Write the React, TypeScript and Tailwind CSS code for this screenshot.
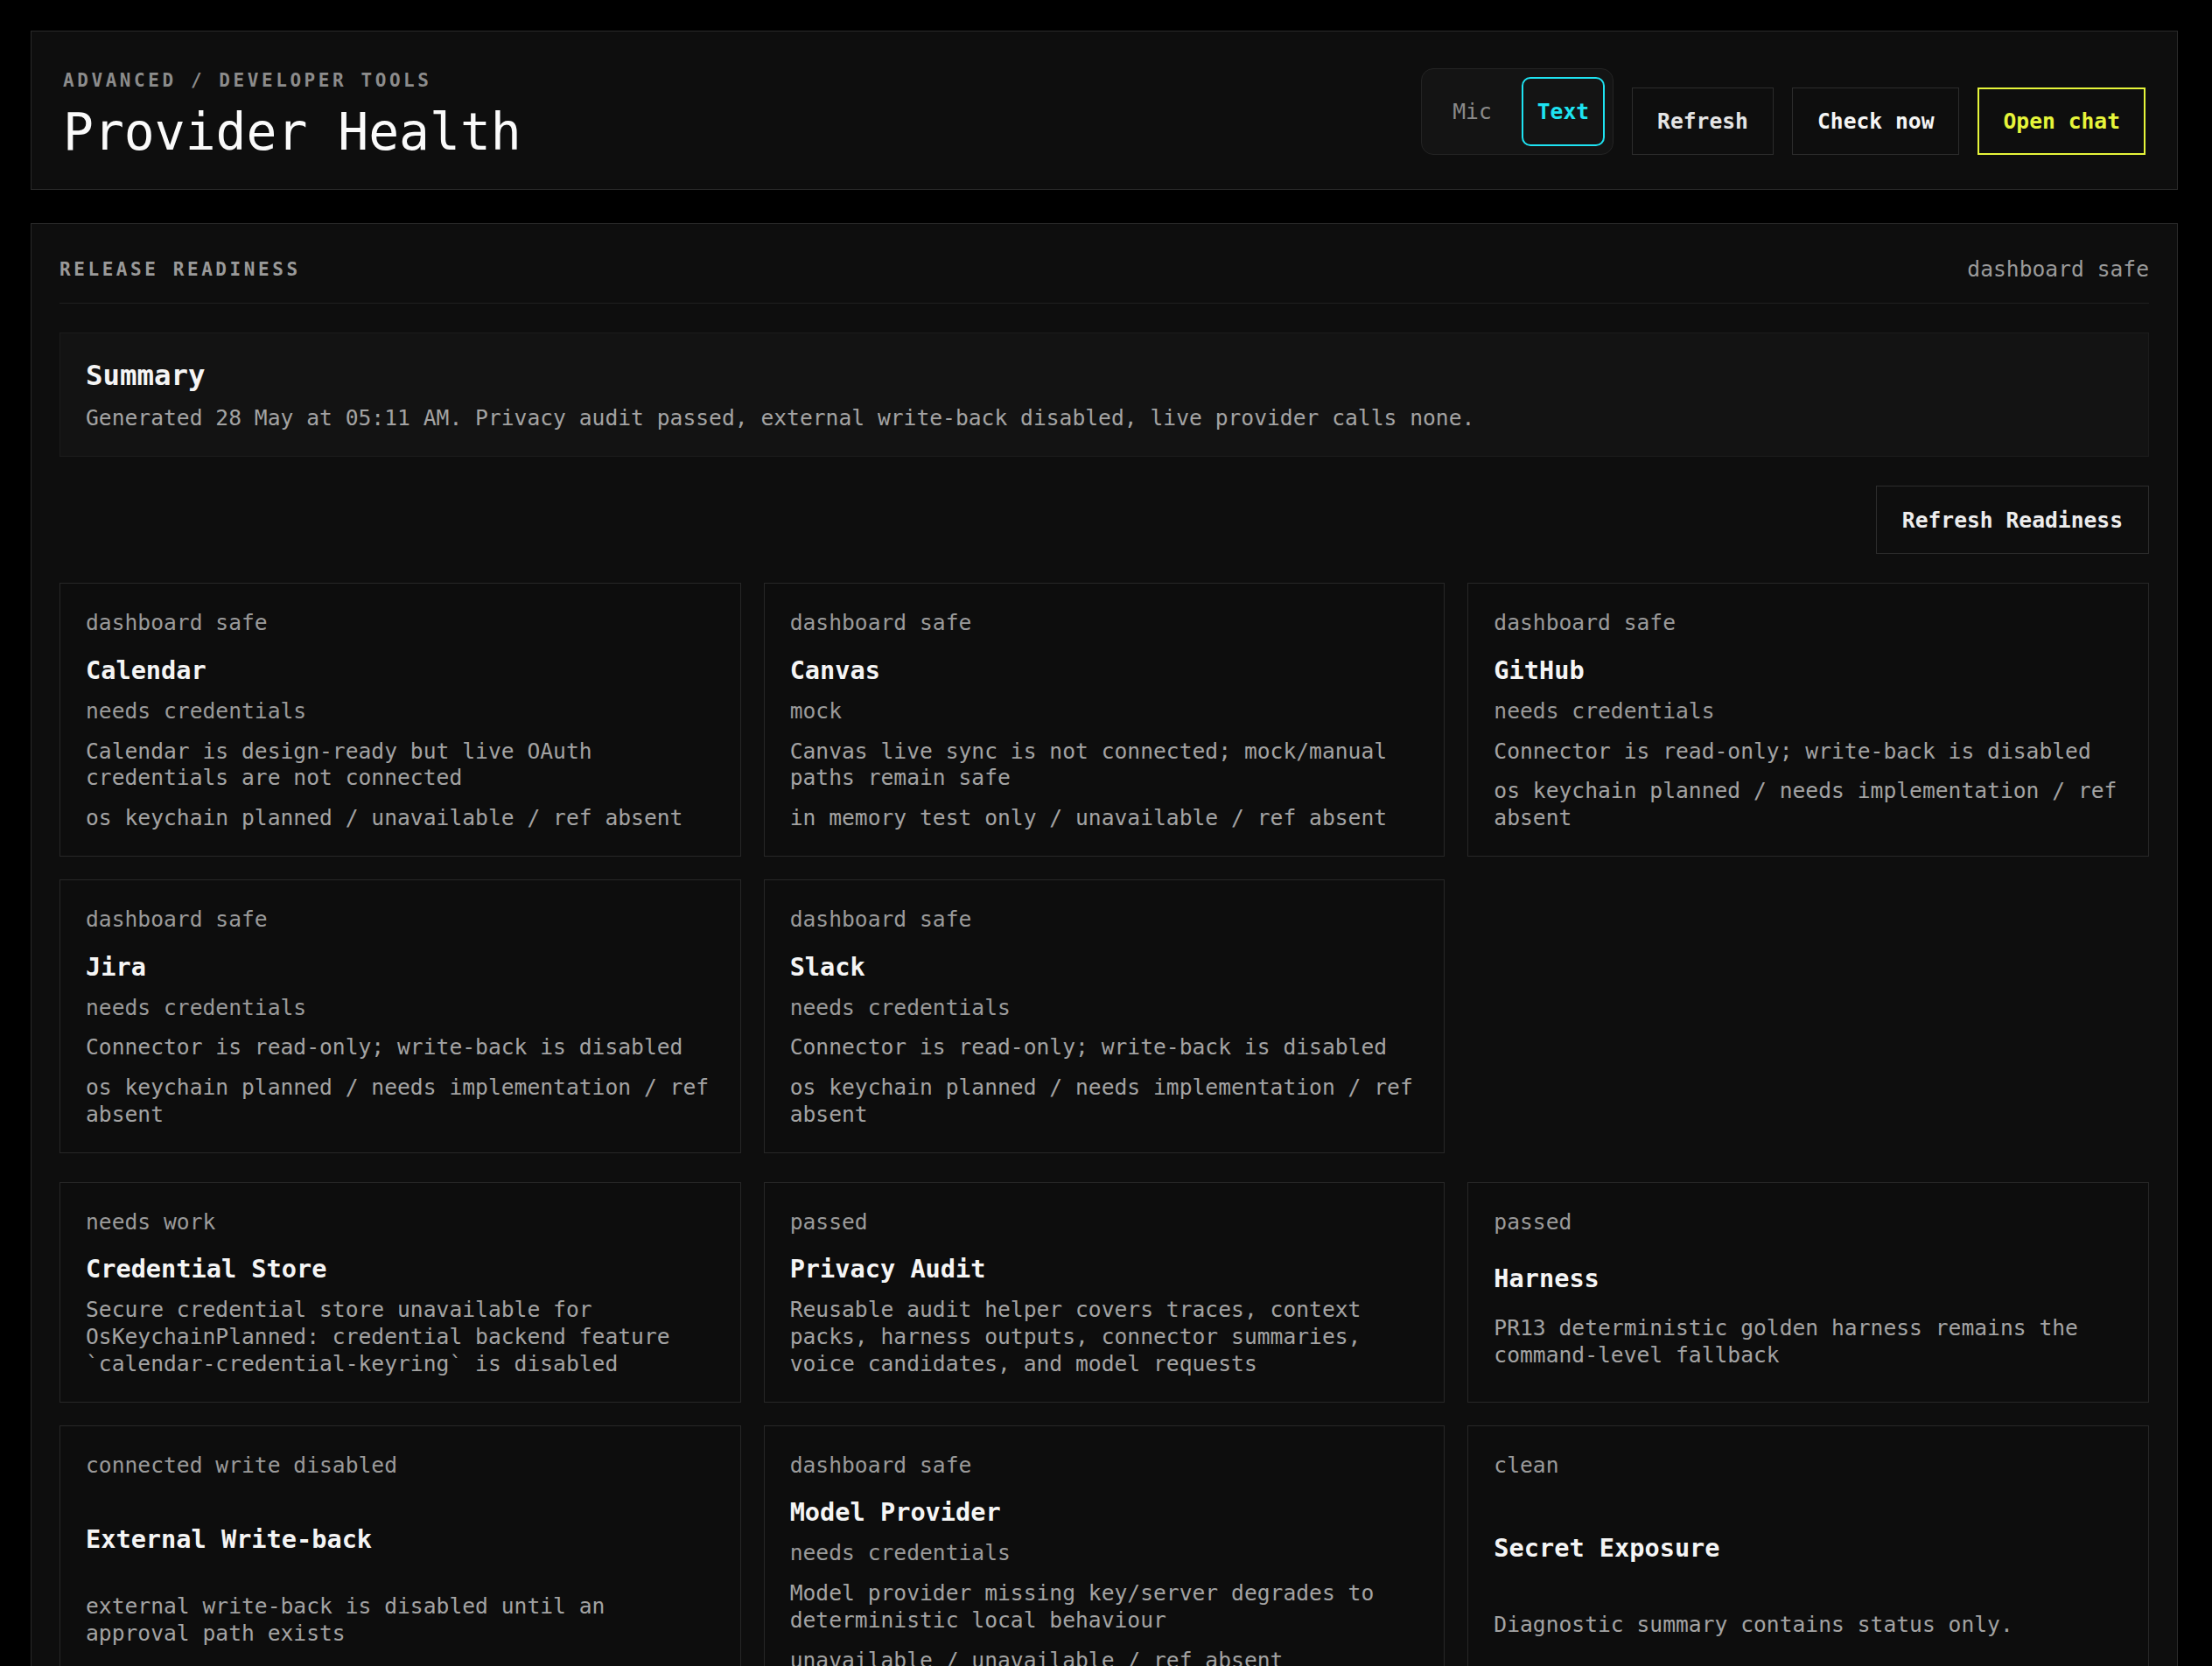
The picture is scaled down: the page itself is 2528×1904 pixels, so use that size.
import React from 'react';

type Item = {
  label: string;
  title: string;
  status?: string;
  desc: string;
  meta?: string;
};

const connectors: Item[] = [
  {
    label: 'dashboard safe',
    title: 'Calendar',
    status: 'needs credentials',
    desc: 'Calendar is design-ready but live OAuth credentials are not connected',
    meta: 'os keychain planned / unavailable / ref absent',
  },
  {
    label: 'dashboard safe',
    title: 'Canvas',
    status: 'mock',
    desc: 'Canvas live sync is not connected; mock/manual paths remain safe',
    meta: 'in memory test only / unavailable / ref absent',
  },
  {
    label: 'dashboard safe',
    title: 'GitHub',
    status: 'needs credentials',
    desc: 'Connector is read-only; write-back is disabled',
    meta: 'os keychain planned / needs implementation / ref absent',
  },
  {
    label: 'dashboard safe',
    title: 'Jira',
    status: 'needs credentials',
    desc: 'Connector is read-only; write-back is disabled',
    meta: 'os keychain planned / needs implementation / ref absent',
  },
  {
    label: 'dashboard safe',
    title: 'Slack',
    status: 'needs credentials',
    desc: 'Connector is read-only; write-back is disabled',
    meta: 'os keychain planned / needs implementation / ref absent',
  },
];

const checks: Item[] = [
  {
    label: 'needs work',
    title: 'Credential Store',
    desc: 'Secure credential store unavailable for OsKeychainPlanned: credential backend feature `calendar-credential-keyring` is disabled',
  },
  {
    label: 'passed',
    title: 'Privacy Audit',
    desc: 'Reusable audit helper covers traces, context packs, harness outputs, connector summaries, voice candidates, and model requests',
  },
  {
    label: 'passed',
    title: 'Harness',
    desc: 'PR13 deterministic golden harness remains the command-level fallback',
  },
  {
    label: 'connected write disabled',
    title: 'External Write-back',
    desc: 'external write-back is disabled until an approval path exists',
  },
  {
    label: 'dashboard safe',
    title: 'Model Provider',
    status: 'needs credentials',
    desc: 'Model provider missing key/server degrades to deterministic local behaviour',
    meta: 'unavailable / unavailable / ref absent',
  },
  {
    label: 'clean',
    title: 'Secret Exposure',
    desc: 'Diagnostic summary contains status only.',
  },
];

function ReadinessCard({ item }: { item: Item }) {
  return (
    <div className="grid gap-[15px] border border-[#272727] bg-[#0d0d0d] px-[29px] pt-[30px] pb-[27px] text-[24.65px] leading-[30.75px] text-[#a3a3a3]">
      <div className="text-[#9a9a9a]">{item.label}</div>
      <h3 className="mt-[6px] text-[28.6px] leading-[34px] font-bold text-[#f5f5f5]">{item.title}</h3>
      {item.status && <div className="text-[#9a9a9a]">{item.status}</div>}
      <p>{item.desc}</p>
      {item.meta && <div>{item.meta}</div>}
    </div>
  );
}

export default function App() {
  return (
    <div className="min-h-screen bg-black pl-[35px] pr-[39px] pt-[35px] pb-[40px] text-white [font-family:'DejaVu_Sans_Mono',monospace]">
      <div className="flex flex-col gap-[38px]">
        {/* header */}
        <header className="flex items-center justify-between border border-[#2a2a2a] bg-[#0e0e0e] px-[36px] pt-[38px] pb-[35px]">
          <div className="flex flex-col gap-[11px]">
            <div className="text-[21px] leading-[36px] font-bold tracking-[0.17em] text-[#8c8c8c]">
              ADVANCED / DEVELOPER TOOLS
            </div>
            <h1 className="text-[58px] leading-[60px] text-[#fafafa]">Provider Health</h1>
          </div>

          <div className="flex items-end gap-[21px] text-[24.65px] leading-[29px]">
            <div className="flex gap-[8px] rounded-[14px] border border-[#242424] bg-[#141414] p-[9px]">
              <button className="h-[79px] px-[26px] text-[#8a8a8a]">Mic</button>
              <button className="h-[79px] rounded-[10px] border-2 border-[#1ee3f2] px-[16px] font-bold text-[#1ee3f2]">
                Text
              </button>
            </div>
            <button className="h-[77px] border border-[#2c2c2c] px-[28px] font-bold text-[#e4e4e4]">Refresh</button>
            <button className="h-[77px] border border-[#2c2c2c] px-[28px] font-bold text-[#f5f5f5]">Check now</button>
            <button className="h-[77px] border-2 border-[#e6f53a] px-[27px] font-bold text-[#e6f53a]">Open chat</button>
          </div>
        </header>

        {/* release readiness */}
        <section className="border border-[#2a2a2a] bg-[#0e0e0e] p-[32px]">
          <div className="flex flex-col gap-[33px]">
            <div className="flex items-center justify-between border-b border-[#1f1f1f] pt-[2px] pb-[20px]">
              <h2 className="text-[21px] leading-[36px] font-bold tracking-[0.17em] text-[#9a9a9a]">
                RELEASE READINESS
              </h2>
              <span className="text-[24.65px] leading-[36px] text-[#9a9a9a]">dashboard safe</span>
            </div>

            <div className="border border-[#1c1c1c] bg-[#131313] px-[29px] pt-[28px] pb-[25px]">
              <h3 className="text-[32.4px] leading-[40px] font-bold text-[#f5f5f5]">Summary</h3>
              <p className="mt-[10px] text-[24.65px] leading-[37px] text-[#a3a3a3]">
                Generated 28 May at 05:11 AM. Privacy audit passed, external write-back disabled, live provider calls none.
              </p>
            </div>

            <div className="flex justify-end">
              <button className="h-[78px] border border-[#2c2c2c] px-[29px] text-[24.65px] leading-[29px] font-bold text-[#ededed]">
                Refresh Readiness
              </button>
            </div>

            <div className="grid grid-cols-3 gap-[26px]">
              {connectors.map((item) => (
                <ReadinessCard key={item.title} item={item} />
              ))}
            </div>

            <div className="grid grid-cols-3 gap-[26px]">
              {checks.map((item) => (
                <ReadinessCard key={item.title} item={item} />
              ))}
            </div>
          </div>
        </section>
      </div>
    </div>
  );
}
